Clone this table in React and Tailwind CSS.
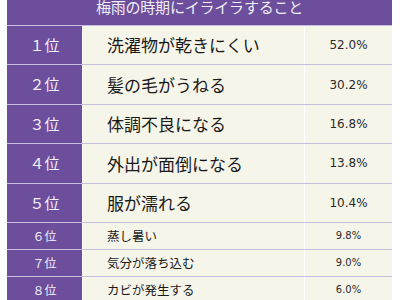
import React from "react";

const big = [
  ["１位", "洗濯物が乾きにくい", "52.0%"],
  ["２位", "髪の毛がうねる", "30.2%"],
  ["３位", "体調不良になる", "16.8%"],
  ["４位", "外出が面倒になる", "13.8%"],
  ["５位", "服が濡れる", "10.4%"],
];
const small = [
  ["６位", "蒸し暑い", "9.8%"],
  ["７位", "気分が落ち込む", "9.0%"],
  ["８位", "カビが発生する", "6.0%"],
];

const jp = "font-['Noto_Sans_CJK_JP','Noto_Sans',sans-serif]";
const num = "font-['DejaVu_Sans','Noto_Sans_CJK_JP',sans-serif]";

export default function App() {
  return (
    <div className="w-[400px] h-[300px] bg-white overflow-hidden">
      <div className="mx-[7px] w-[385px]">
        <div className="h-[25px] bg-[#6d4e9d] flex items-end justify-center overflow-hidden font-['Noto_Sans_CJK_JP','Noto_Sans',sans-serif]">
          <span className="text-[15px] leading-[15px] pb-[11px] text-[#f1eef6] tracking-[-0.2px]">
            梅雨の時期にイライラすること
          </span>
        </div>
        {big.map(([r, t, p]) => (
          <div key={r} className="grid grid-cols-[75px_222px_88px] h-[39.4px] border-t border-[#c9bddd]">
            <div className={"bg-[#6d4e9d] flex items-center justify-center text-[15px] text-[#f3f0f8] " + jp}>
              {r}
            </div>
            <div className={"bg-[#f6f5ea] border-l border-white flex items-center pl-[24px] text-[17px] text-[#1a1a1a] " + jp}>
              {t}
            </div>
            <div className={"bg-[#f6f5ea] border-l border-white flex items-center justify-center text-[12px] text-[#2a2a2a] " + num}>
              {p}
            </div>
          </div>
        ))}
        {small.map(([r, t, p]) => (
          <div key={r} className="grid grid-cols-[75px_222px_88px] h-[27px] border-t border-[#c9bddd]">
            <div className={"bg-[#6d4e9d] flex items-center justify-center text-[12px] text-[#f3f0f8] " + jp}>
              {r}
            </div>
            <div className={"bg-[#f6f5ea] border-l border-white flex items-center pl-[24px] text-[12.5px] text-[#1a1a1a] " + jp}>
              {t}
            </div>
            <div className={"bg-[#f6f5ea] border-l border-white flex items-center justify-center text-[10px] text-[#2a2a2a] " + num}>
              {p}
            </div>
          </div>
        ))}
      </div>
    </div>
  );
}
